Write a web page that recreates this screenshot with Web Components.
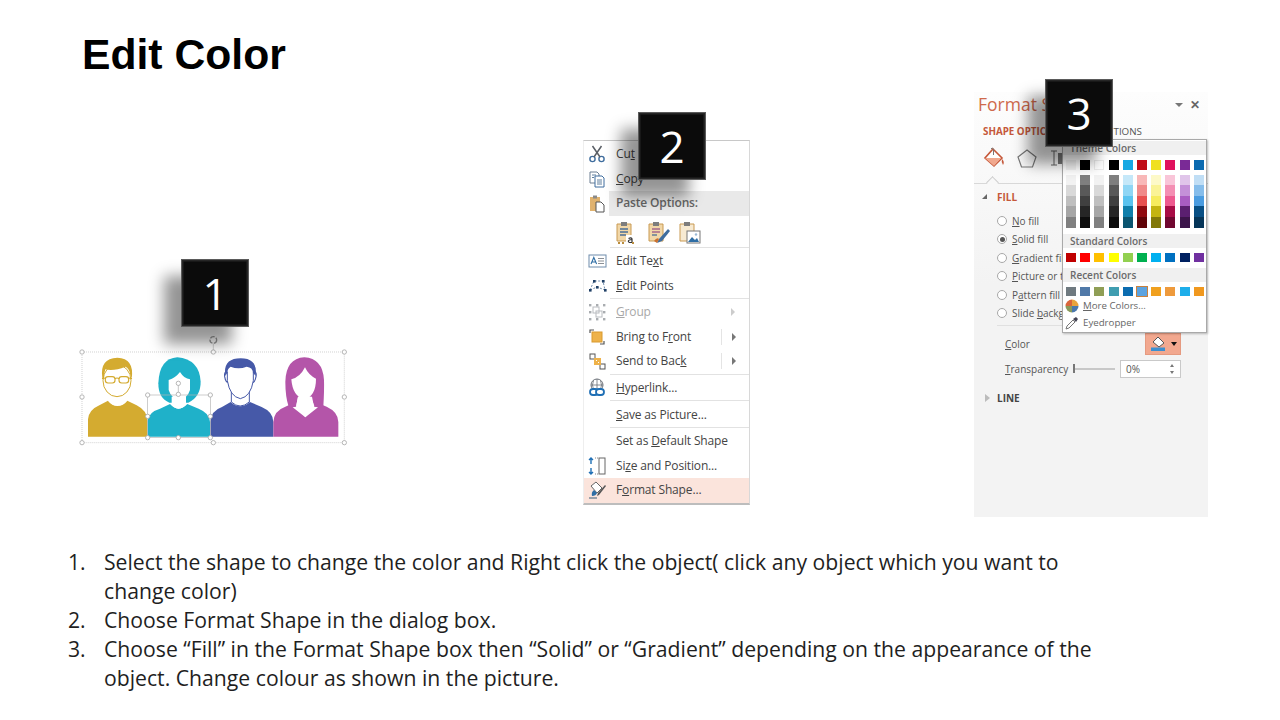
<!DOCTYPE html>
<html lang="en">
<head>
<meta charset="utf-8">
<title>Edit Color</title>
<style>
  html, body { margin: 0; background: #fff; }
  body { width: 1280px; height: 720px; overflow: hidden; font-family: "Open Sans", "Liberation Sans", sans-serif; }
</style>
</head>
<body>
<edit-color-slide></edit-color-slide>

<script>
// small helper so every element below reads the same
function shadow(el, html) {
  el.attachShadow({ mode: 'open' }).innerHTML = html;
}

const ICONS = {
  cut: `<circle cx="5.5" cy="15" r="2.6" fill="none" stroke="#3f6d9e" stroke-width="1.4"/><circle cx="14.5" cy="15" r="2.6" fill="none" stroke="#3f6d9e" stroke-width="1.4"/><path d="M7 13 14.5 2M13 13 5.5 2" stroke="#5a5f66" stroke-width="1.5" fill="none"/>`,
  copy: `<path d="M3 3h7l2 2v9H3z" fill="#fff" stroke="#6d7f93"/><path d="M8 7h7l2 2v9H8z" fill="#fff" stroke="#3f6d9e"/><path d="M5 6h4M5 8.5h2M10 11h5M10 13h5M10 15h5" stroke="#5f7f9e"/>`,
  paste: `<path d="M3 4h10v14H3z" fill="#e0b26e"/><path d="M6 2.5h4v3H6z" fill="#8a8a8a"/><path d="M9 9h5l3 3v7H9z" fill="#fff" stroke="#555"/>`,
  pasteText: `<path d="M3 4h14v17H3z" fill="#f1d7a8" stroke="#c99a52"/><path d="M7 2h6v4H7z" fill="#7d7d7d"/><path d="M6 9h8M6 12h8M6 15h6" stroke="#4a6f96" stroke-width="1.3"/><rect x="12" y="15" width="10" height="9" fill="#fff"/><path d="M14.500 18.500q3-1.500 3.500.5v3.500h-2.500q-1.500-.5-1-1.800t3.500-1.200" fill="none" stroke="#333" stroke-width="1.200"/><path d="M4 23h2M8 23h2M18 23h2" stroke="#b98d3e" stroke-width="2"/>`,
  pasteFormat: `<path d="M3 4h14v17H3z" fill="#f1d7a8" stroke="#c99a52"/><path d="M7 2h6v4H7z" fill="#7d7d7d"/><path d="M6 9h8M6 12h8" stroke="#a5688a" stroke-width="1.3"/><path d="M6 15h5" stroke="#4a6f96" stroke-width="1.3"/><path d="M22 9 13 19l-2 4 5-2 8-10z" fill="#3f6d9e"/><path d="M8 21q3-4 5-2l-2 4z" fill="#c9702f"/>`,
  pastePicture: `<path d="M3 4h14v17H3z" fill="#f7ead2" stroke="#c99a52"/><path d="M7 2h6v4H7z" fill="#7d7d7d"/><rect x="10" y="11" width="13" height="12" fill="#fff" stroke="#777"/><path d="M11 22l4-5 3 3 2-2 2 4z" fill="#2f6ea5"/><circle cx="19" cy="14.5" r="1.2" fill="#9bbad6"/>`,
  editText: `<rect x="2" y="4" width="17" height="12" fill="#fff" stroke="#6f8cab"/><path d="M4 13 6.800 6.500 9.600 13M5 11h3.600" fill="none" stroke="#2f6ea5" stroke-width="1.100"/><path d="M11 7.500h6M11 10h6M11 12.500h6" stroke="#8a8f95"/>`,
  editPoints: `<path d="M3 14 7 5h9l2 9-8-3z" fill="none" stroke="#6f8cab" stroke-dasharray="2 1.5"/><g fill="#1f3f66"><rect x="2" y="13" width="2.6" height="2.6"/><rect x="6" y="4" width="2.6" height="2.6"/><rect x="15" y="4" width="2.6" height="2.6"/><rect x="17" y="13" width="2.6" height="2.6"/><rect x="9" y="10" width="2.6" height="2.6"/></g>`,
  group: `<g fill="none" stroke="#b9bcc0"><rect x="6" y="5" width="6" height="6"/><rect x="9" y="9" width="6" height="6"/></g><g fill="#a9acb0"><rect x="2" y="2" width="2.4" height="2.4"/><rect x="9" y="2" width="2.4" height="2.4"/><rect x="16" y="2" width="2.4" height="2.4"/><rect x="2" y="9" width="2.4" height="2.4"/><rect x="16" y="9" width="2.4" height="2.4"/><rect x="2" y="16" width="2.4" height="2.4"/><rect x="9" y="16" width="2.4" height="2.4"/><rect x="16" y="16" width="2.4" height="2.4"/></g>`,
  front: `<path d="M3 6V3h4M17 14v3h-4" fill="none" stroke="#555" stroke-width="1.2"/><rect x="5" y="5" width="10" height="10" fill="#eeb24a" stroke="#d99a2e"/>`,
  back: `<rect x="3" y="3" width="5" height="5" fill="#fff" stroke="#555"/><rect x="13" y="13" width="5" height="5" fill="#fff" stroke="#555"/><rect x="7" y="7" width="7" height="7" fill="#eeb24a"/><path d="M9 9h1v1H9zM11 11h1v1h-1z" fill="#fff"/>`,
  link: `<circle cx="10" cy="7" r="6" fill="none" stroke="#6b7077"/><path d="M4 7h12M10 1v12M6.5 2.5q-2 4.500 0 9M13.500 2.500q2 4.500 0 9" fill="none" stroke="#6b7077" stroke-width=".8"/><g fill="#fff" stroke="#1f6fb5" stroke-width="1.8"><rect x="3" y="11" width="8" height="6" rx="3"/><rect x="9" y="11" width="8" height="6" rx="3"/></g>`,
  size: `<path d="M4 2v6M2 4l2-2 2 2M4 12v6M2 16l2 2 2-2" fill="none" stroke="#1f6fb5" stroke-width="1.4"/><path d="M8 2h3M8 18h3" stroke="#888" stroke-dasharray="1 1"/><rect x="12" y="2" width="6" height="16" fill="#fff" stroke="#666"/>`,
  format: `<path d="M4 6l5-4 6 6-5 5z" fill="#fff" stroke="#666"/><path d="M5 16q-1-4 2-6l3 3q-1 3-5 3z" fill="#2f6ea5"/><path d="M19 6l-7 9-2 1 1-3 7-8z" fill="#555"/><path d="M2 18h8" stroke="#7a8a9a" stroke-width="1.500"/>`,
};

class SlideHeading extends HTMLElement {
  connectedCallback() {
    if (this.shadowRoot) return;
    shadow(this, `<style>
      :host { display: block; height: 92px; box-sizing: border-box; padding: 29px 0 0 82px; }
      h1 { margin: 0; font: 700 42.67px/50px "Liberation Sans", Arial, sans-serif; color: #000; }
    </style><h1><slot></slot></h1>`);
  }
}

class StepBadge extends HTMLElement {
  connectedCallback() {
    if (this.shadowRoot) return;
    shadow(this, `<style>
      :host {
        position: absolute; z-index: 5; width: 68px; height: 68px; box-sizing: border-box;
        display: flex; align-items: center; justify-content: center;
        background: #0b0b0b; color: #fff;
        font: 400 44px/1 "Open Sans", sans-serif;
        box-shadow: -17px 17px 14px rgba(0,0,0,.42), inset 0 0 0 1px #5a5a5a, inset 0 0 0 2.500px #262626;
      }
    </style><slot></slot>`);
  }
}

class PeopleShape extends HTMLElement {
  connectedCallback() {
    if (this.shadowRoot) return;
    const handles = [[36,306],[430,306],[823,306],[36,441],[823,441],[36,578],[430,578],[823,578]];
    const inner = [[233,435],[421,435],[233,563],[325,563],[421,563],[233,499],[421,499],[325,400],[325,433]];
    const dot = ([x, y]) => `<circle cx="${x}" cy="${y}" r="6.500" fill="#fff" stroke="#a8a8a8" stroke-width="2.500"/>`;
    shadow(this, `<style>
      :host { position: absolute; display: block; width: 290px; height: 200px; }
      svg { display: block; }
    </style>
    <svg width="290" height="200" viewBox="0 0 870 600">
      <rect x="36" y="306" width="787" height="272" fill="none" stroke="#c9c9c9" stroke-width="2.500" stroke-dasharray="3 3"/>
      <path d="M430 282v24" stroke="#bbb" stroke-width="2"/>
      <circle cx="430" cy="270" r="10" fill="none" stroke="#999" stroke-width="4" stroke-dasharray="14 4"/>

      <!-- gold -->
      <path d="M54 560V508Q56 480 88 466L114 452Q126 468 142 468Q160 468 172 452L200 466Q232 482 232 512V560Z" fill="#d4ab30"/>
      <path d="M114 420V452Q126 466 142 466Q160 466 170 452V420" fill="#fff"/>
      <ellipse cx="141" cy="392" rx="42" ry="48" fill="#fff" stroke="#d4ab30" stroke-width="3"/>
      <path d="M97 384Q88 325 142 323Q194 325 185 386L180 372Q178 355 166 350Q132 364 106 358Q102 370 102 384Z" fill="#d4ab30"/>
      <g fill="none" stroke="#d4ab30" stroke-width="3.500">
        <rect x="106" y="380" width="29" height="19" rx="8"/><rect x="147" y="380" width="29" height="19" rx="8"/><path d="M135 386q6-4 12 0M106 384l-10 2M176 384l10 2"/>
      </g>

      <!-- teal -->
      <path d="M233 560V512Q236 486 270 476L300 462Q325 490 352 462L386 476Q420 490 420 516V560Z" fill="#1fb1c9"/>
      <path d="M322 322Q268 325 265 400Q265 445 298 458L355 458Q392 440 392 395Q388 328 322 322Z" fill="#1fb1c9"/>
      <path d="M296 390Q316 384 330 366Q342 386 360 388V420Q352 446 328 448Q304 446 296 420Z" fill="#fff"/>
      <path d="M305 440V464Q325 488 348 464V440Z" fill="#fff"/>

      <!-- blue -->
      <path d="M421 560V516Q423 482 456 471L482 456Q510 482 540 456L575 471Q610 486 610 516V560Z" fill="#4659a8"/>
      <path d="M484 425V456Q510 480 538 456V425" fill="#fff" stroke="#4659a8" stroke-width="3"/>
      <path d="M472 365Q462 364 464 380Q467 398 476 398M550 365Q561 364 558 380Q555 398 546 398" fill="#fff" stroke="#4659a8" stroke-width="3.500"/>
      <path d="M472 366V392Q480 440 511 446Q542 440 550 392V366" fill="#fff" stroke="#4659a8" stroke-width="3"/>
      <path d="M466 378Q458 325 512 325Q564 325 557 378L549 368Q548 352 530 350Q505 360 482 350Q472 356 472 368Z" fill="#4659a8"/>

      <!-- purple -->
      <path d="M610 560V516Q612 482 646 470L672 458L706 502L742 458L770 470Q805 486 805 516V560Z" fill="#b455a9"/>
      <path d="M703 322Q648 325 646 395Q646 440 656 470H678L684 440H722L734 470H760Q763 420 762 390Q758 325 703 322Z" fill="#b455a9"/>
      <path d="M664 388Q690 382 705 352Q716 376 738 386Q738 438 703 448Q668 440 664 388Z" fill="#fff"/>
      <path d="M684 440 678 470 668 472 706 502 744 472 732 470 726 440Z" fill="#fff"/>

      <rect x="233" y="435" width="188" height="128" fill="none" stroke="#b5b5b5" stroke-width="2"/>
      ${handles.map(dot).join('')}
      <path d="M325 400V433" stroke="#aaa" stroke-width="2"/>
      ${inner.map(dot).join('')}
    </svg>`);
  }
}

class MenuRow extends HTMLElement {
  connectedCallback() {
    if (this.shadowRoot) return;
    const icon = ICONS[this.getAttribute('icon')] || '';
    shadow(this, `<style>
      :host { display: flex; align-items: center; height: 24.6px; color: #444; font: 12px/1 "Open Sans", sans-serif; letter-spacing: -.15px; }
      :host([disabled]) { color: #a8a8a8; }
      :host([hot]) { background: #fbe4dc; }
      :host([soft]) { font-weight: 600; color: #666; }
      :host([soft]) .tx { padding-left: 7px; background: #e9e9e9; line-height: 24.6px; margin-left: -1px; }
      .ic { width: 26px; height: 20px; flex: none; padding-left: 3px; box-sizing: border-box; }
      .tx { flex: 1; padding-left: 6px; white-space: nowrap; }
      .ar { width: 28px; flex: none; display: flex; align-items: center; height: 16px; box-sizing: border-box; }
      .ar i { width: 0; height: 0; border-left: 4px solid #777; border-top: 4px solid transparent; border-bottom: 4px solid transparent; margin-left: 10px; }
      :host([split]) .ar { border-left: 1px solid #e4e4e4; }
      :host([disabled]) .ar i { border-left-color: #ccc; }
    </style>
    <span class="ic"><svg width="20" height="20" viewBox="0 0 20 20">${icon}</svg></span>
    <span class="tx"><slot></slot></span>
    ${this.hasAttribute('more') ? '<span class="ar"><i></i></span>' : ''}`);
  }
}

class MenuRule extends HTMLElement {
  connectedCallback() {
    if (this.shadowRoot) return;
    shadow(this, `<style>
      :host { display: block; height: 1px; margin: 0 0 1px 26px; background: #e2e2e2; }
    </style>`);
  }
}

class PasteIcons extends HTMLElement {
  connectedCallback() {
    if (this.shadowRoot) return;
    const pic = n => `<svg width="25" height="25" viewBox="0 0 25 25">${ICONS[n]}</svg>`;
    shadow(this, `<style>
      :host { display: flex; gap: 6.500px; height: 31px; padding: 4px 0 0 30px; box-sizing: border-box; }
    </style>${pic('pasteText')}${pic('pasteFormat')}${pic('pastePicture')}`);
  }
}

class ShapeMenu extends HTMLElement {
  connectedCallback() {
    if (this.shadowRoot) return;
    shadow(this, `<style>
      :host {
        position: absolute; display: block; width: 167px; box-sizing: border-box; background: #fff;
        padding: 1px 0 0;
        border-top: 1px solid #c8c8c8; border-right: 1px solid #d8d8d8;
        border-left: 1px solid #eee; border-bottom: 2px solid #bdbdbd;
      }
    </style><slot></slot>`);
  }
}

class FormatPane extends HTMLElement {
  connectedCallback() {
    if (this.shadowRoot) return;
    shadow(this, `<style>
      :host {
        position: absolute; display: block; width: 234px; height: 425px; box-sizing: border-box;
        padding: 2px 0 0; background: linear-gradient(#fdfdfd, #f3f3f3 45%);
        font: 10px/1 "Open Sans", sans-serif; color: #555; overflow: hidden;
      }
      .top { display: flex; align-items: center; justify-content: space-between; height: 22px; padding: 0 8px 0 4px; }
      .title { font-size: 17.500px; color: #cf6a4c; white-space: nowrap; }
      .ctl { display: flex; align-items: center; gap: 7px; color: #666; }
      .ctl i { width: 0; height: 0; border-top: 4px solid #777; border-left: 4px solid transparent; border-right: 4px solid transparent; }
      .ctl b { font-size: 12px; }
      .tabs { display: flex; justify-content: space-between; padding: 11px 66px 0 9px; font-size: 9.800px; }
      .tabs b { color: #c5583a; font-weight: 700; }
      .icons { display: flex; gap: 9px; padding: 6px 0 0 8px; height: 31px; box-sizing: border-box; align-items: center; margin-top: 3px; }
      .rule { height: 1px; margin: 12px 0 0 0; background: #d8d8d8; position: relative; }
      .rule::before { content: ""; position: absolute; left: 14px; top: -5px; width: 8px; height: 8px; background: #f8f8f8; border-left: 1px solid #ccc; border-top: 1px solid #ccc; transform: rotate(45deg); }
      .sec { display: flex; align-items: center; gap: 7px; font-weight: 700; }
      .sec i { width: 0; height: 0; }
      .fill { margin: 7px 0 0 8px; color: #c5583a; height: 12px; }
      .fill i { border-right: 5px solid #666; border-top: 5px solid transparent; }
      .fill span { margin-left: 3px; }
      .radios { margin: 9px 0 0 23px; display: flex; flex-direction: column; }
      .line { margin: 14px 0 0 11px; height: 12px; color: #444; gap: 7px; }
      .line i { border-left: 5px solid #bbb; border-top: 4px solid transparent; border-bottom: 4px solid transparent; }
      .sep { height: 1px; background: #e0e0e0; margin: 3px 27px 0 23px; }
      .prop { display: flex; align-items: center; margin-left: 31px; font-size: 10px; }
      .prop .k { width: 68px; }
      .color { height: 22px; margin-top: 7px; justify-content: space-between; padding-right: 27px; }
      .btn { width: 36px; height: 22px; box-sizing: border-box; background: #f2a88f; border: 1px solid #e59a80; display: flex; align-items: center; justify-content: center; gap: 3px; }
      .btn i { width: 0; height: 0; border-top: 4px solid #111; border-left: 3.500px solid transparent; border-right: 3.500px solid transparent; }
      .trans { height: 18px; margin-top: 5px; }
      .slider { width: 42px; height: 2px; background: #c8c8c8; position: relative; margin-right: 5px; }
      .slider::before { content: ""; position: absolute; left: 0; top: -4px; width: 1.500px; height: 9px; background: #777; }
      .num { width: 61px; height: 18px; box-sizing: border-box; background: #fff; border: 1px solid #c9c9c9; padding: 3px 0 0 5px; position: relative; }
      .num::after { content: ""; position: absolute; right: 6px; top: 3px; border-bottom: 3px solid #777; border-left: 2.500px solid transparent; border-right: 2.500px solid transparent; }
      .num::before { content: ""; position: absolute; right: 6px; bottom: 3px; border-top: 3px solid #777; border-left: 2.500px solid transparent; border-right: 2.500px solid transparent; }
    </style>
    <div class="top">
      <span class="title">Format S</span>
      <span class="ctl"><i></i><b>✕</b></span>
    </div>
    <div class="tabs"><b>SHAPE OPTIC</b><span>TIONS</span></div>
    <div class="icons">
      <svg width="24" height="24" viewBox="0 0 24 24"><path d="M11 3 20 12 12 20 3 12Z" fill="#fff" stroke="#c5583a" stroke-width="1.600"/><path d="M3 12h16l-7 8z" fill="#f0a88e"/><path d="M9 3q1-2 2.500 0v6" fill="none" stroke="#777"/><path d="M20 13q3 3 1 6-2-3-1-6z" fill="#c5583a"/></svg>
      <svg width="24" height="24" viewBox="0 0 24 24"><path d="M12 4 21 11 17.500 21H6.500L3 11Z" fill="none" stroke="#777" stroke-width="1.200"/></svg>
      <svg width="24" height="24" viewBox="0 0 24 24"><path d="M3 5h6M6 5v14M3 19h6" stroke="#666" fill="none"/><rect x="10" y="7" width="11" height="11" fill="#777"/></svg>
    </div>
    <div class="rule"></div>
    <div class="sec fill"><i></i><span>FILL</span></div>
    <div class="radios">
      <pane-radio><u>N</u>o fill</pane-radio>
      <pane-radio checked><u>S</u>olid fill</pane-radio>
      <pane-radio><u>G</u>radient fill</pane-radio>
      <pane-radio><u>P</u>icture or te</pane-radio>
      <pane-radio>P<u>a</u>ttern fill</pane-radio>
      <pane-radio>Slide <u>b</u>ackgr</pane-radio>
    </div>
    <div class="sep"></div>
    <div class="prop color">
      <span><u>C</u>olor</span>
      <span class="btn">
        <svg width="18" height="16" viewBox="0 0 18 16"><path d="M8 1 14 7 9 11 3 6z" fill="#fff" stroke="#555"/><rect x="1" y="11.500" width="14" height="3.500" fill="#3d8fd0"/></svg><i></i>
      </span>
    </div>
    <div class="prop trans">
      <span class="k"><u>T</u>ransparency</span>
      <span class="slider"></span>
      <span class="num">0%</span>
    </div>
    <div class="sec line"><i></i><span>LINE</span></div>`);
  }
}

class PaneRadio extends HTMLElement {
  connectedCallback() {
    if (this.shadowRoot) return;
    shadow(this, `<style>
      :host { display: flex; align-items: center; gap: 5px; height: 18.400px; font-size: 10px; white-space: nowrap; color: #555; }
      i { width: 10px; height: 10px; box-sizing: border-box; border: 1px solid #a8a8a8; border-radius: 50%; background: #fff; display: flex; align-items: center; justify-content: center; }
      :host([checked]) i::before { content: ""; width: 5px; height: 5px; border-radius: 50%; background: #555; }
    </style><i></i><span><slot></slot></span>`);
  }
}

class SwatchRow extends HTMLElement {
  connectedCallback() {
    if (this.shadowRoot) return;
    const cols = this.getAttribute('colors').split(' ');
    const sel = this.getAttribute('selected');
    shadow(this, `<style>
      :host { display: grid; grid-template-columns: repeat(10, 10px); column-gap: 4.200px; padding-left: 3px; height: 9.500px; }
      b { display: block; box-sizing: border-box; }
      b.pale { border: 1px solid #ececec; }
      b.on { outline: 1.500px solid #c9803c; }
    </style>${cols.map((c, i) => `<b style="background:${c}" class="${String(i) === sel ? 'on' : ''} ${c === '#fff' ? 'pale' : ''}"></b>`).join('')}`);
  }
}

class TintGrid extends HTMLElement {
  connectedCallback() {
    if (this.shadowRoot) return;
    const cols = [
      '#f2f2f2 #d9d9d9 #bfbfbf #a6a6a6 #808080', '#7f7f7f #595959 #404040 #262626 #0d0d0d',
      '#f2f2f2 #d9d9d9 #bfbfbf #a6a6a6 #808080', '#7f7f7f #595959 #404040 #262626 #0d0d0d',
      '#c5e8f9 #8fd6f5 #5ac3ef #0f7fab #0a5570', '#f8b8b8 #f08a8a #e85050 #900a10 #600408',
      '#fdf9c8 #faf396 #f6ec5e #c4b410 #827808', '#f9c5d8 #f48fb3 #ee5a8f #a80d46 #700830',
      '#e0c5ea #c490d8 #a95cc2 #5b1f70 #3c144a', '#c0def5 #85bdeb #4a9ce0 #084f84 #053558',
    ];
    shadow(this, `<style>
      :host { display: grid; grid-template-columns: repeat(10, 10px); column-gap: 4.200px; padding-left: 3px; height: 53px; margin-top: 5px; }
      div { display: grid; grid-template-rows: repeat(5, 1fr); }
    </style>${cols.map(c => `<div>${c.split(' ').map(x => `<span style="background:${x}"></span>`).join('')}</div>`).join('')}`);
  }
}

class ColorPopup extends HTMLElement {
  connectedCallback() {
    if (this.shadowRoot) return;
    shadow(this, `<style>
      :host {
        position: absolute; z-index: 3; display: block; width: 145px; height: 194px; box-sizing: border-box;
        background: #fff; border: 1px solid #a9a9a9; box-shadow: 1px 1px 2px rgba(0,0,0,.25);
        font: 10px/1 "Open Sans", sans-serif; color: #666;
      }
      .lbl { height: 14px; line-height: 14px; padding-left: 7px; background: #f0f0f0; font-weight: 600; color: #6a6a6a; }
      .first { margin-top: 1px; margin-bottom: 5px; }
      .mid { margin-top: 6px; margin-bottom: 5px; }
      .act { display: flex; align-items: center; gap: 4px; height: 17px; padding-left: 2px; font-size: 9.700px; }
      .act span { white-space: nowrap; }
      .acts { margin-top: 1px; }
    </style>
    <div class="lbl first">Theme Colors</div>
    <swatch-row colors="#f2f2f2 #000 #fff #000 #17a8e3 #c00d17 #f0e020 #e0125e #7a2a96 #0b6ab0"></swatch-row>
    <tint-grid></tint-grid>
    <div class="lbl mid">Standard Colors</div>
    <swatch-row colors="#c00000 #f00 #ffc000 #ff0 #92d050 #00b050 #00b0f0 #0070c0 #002060 #7030a0"></swatch-row>
    <div class="lbl mid" style="margin-top:5.500px">Recent Colors</div>
    <swatch-row colors="#6f7a80 #5079a8 #8f9e55 #3f9db0 #0b6cb0 #5ba3e0 #f0a01e #ee9a3c #1eaeea #f0981e" selected="5"></swatch-row>
    <div class="acts">
      <div class="act">
        <svg width="14" height="14" viewBox="0 0 14 14"><path d="M7 7V.5A6.500 6.500 0 0 1 13.500 7z" fill="#e8a33d"/><path d="M7 7h6.500A6.500 6.500 0 0 1 7 13.500z" fill="#4a78ad"/><path d="M7 7v6.500A6.500 6.500 0 0 1 .5 7z" fill="#8a9a5b"/><path d="M7 7H.5A6.500 6.500 0 0 1 7 .5z" fill="#d9653b"/></svg>
        <span><u>M</u>ore Colors...</span>
      </div>
      <div class="act">
        <svg width="14" height="14" viewBox="0 0 14 14"><path d="M1 13 2 10 8 4 10 6 4 12z" fill="#fff" stroke="#777"/><path d="M8 3 11 1l2 2-2 3z" fill="#445"/></svg>
        <span>Eyedropper</span>
      </div>
    </div>`);
  }
}

class StepItem extends HTMLElement {
  connectedCallback() {
    if (this.shadowRoot) return;
    shadow(this, `<style>
      :host { display: grid; grid-template-columns: 36px 1fr; }
    </style><span>${this.getAttribute('n')}.</span><span><slot></slot></span>`);
  }
}

class StepList extends HTMLElement {
  connectedCallback() {
    if (this.shadowRoot) return;
    shadow(this, `<style>
      :host {
        display: block; width: 1040px; margin-left: 68px;
        font: 400 21.200px/29px "Open Sans", sans-serif; color: #1f1f1f;
      }
    </style><slot></slot>`);
  }
}

class EditColorSlide extends HTMLElement {
  connectedCallback() {
    if (this.shadowRoot) return;
    shadow(this, `<style>
      :host { display: flex; flex-direction: column; width: 1280px; height: 720px; background: #fff; overflow: hidden; }
      .stage { position: relative; flex: none; height: 455px; }
    </style>
    <slide-heading>Edit Color</slide-heading>
    <div class="stage">
      <people-shape style="left:70px;top:158px"></people-shape>
      <step-badge style="left:181px;top:167px">1</step-badge>

      <shape-menu style="left:583px;top:48px">
        <menu-row icon="cut">Cu<u>t</u></menu-row>
        <menu-row icon="copy"><u>C</u>opy</menu-row>
        <menu-row icon="paste" soft>Paste Options:</menu-row>
        <paste-icons></paste-icons>
        <menu-rule></menu-rule>
        <menu-row icon="editText">Edit Te<u>x</u>t</menu-row>
        <menu-row icon="editPoints"><u>E</u>dit Points</menu-row>
        <menu-rule></menu-rule>
        <menu-row icon="group" disabled more><u>G</u>roup</menu-row>
        <menu-row icon="front" more split>Bring to F<u>r</u>ont</menu-row>
        <menu-row icon="back" more split>Send to Bac<u>k</u></menu-row>
        <menu-rule></menu-rule>
        <menu-row icon="link"><u>H</u>yperlink...</menu-row>
        <menu-rule></menu-rule>
        <menu-row><u>S</u>ave as Picture...</menu-row>
        <menu-rule></menu-rule>
        <menu-row>Set as <u>D</u>efault Shape</menu-row>
        <menu-row icon="size">Si<u>z</u>e and Position...</menu-row>
        <menu-row icon="format" hot>F<u>o</u>rmat Shape...</menu-row>
      </shape-menu>
      <step-badge style="left:638px;top:20px">2</step-badge>

      <format-pane style="left:974px;top:0"></format-pane>
      <color-popup style="left:1062px;top:47px"></color-popup>
      <step-badge style="left:1045px;top:-13px">3</step-badge>
    </div>
    <step-list>
      <step-item n="1">Select the shape to change the color and Right click the object( click any object which you want to change color)</step-item>
      <step-item n="2">Choose Format Shape in the dialog box.</step-item>
      <step-item n="3">Choose “Fill” in the Format Shape box then “Solid” or “Gradient” depending on the appearance of the object. Change colour as shown in the picture.</step-item>
    </step-list>`);
  }
}

const ELEMENTS = {
  'slide-heading': SlideHeading, 'step-badge': StepBadge, 'people-shape': PeopleShape,
  'menu-row': MenuRow, 'menu-rule': MenuRule, 'paste-icons': PasteIcons, 'shape-menu': ShapeMenu,
  'format-pane': FormatPane, 'pane-radio': PaneRadio, 'swatch-row': SwatchRow, 'tint-grid': TintGrid,
  'color-popup': ColorPopup, 'step-item': StepItem, 'step-list': StepList, 'edit-color-slide': EditColorSlide,
};
for (const [name, cls] of Object.entries(ELEMENTS)) customElements.define(name, cls);
</script>
</body>
</html>
